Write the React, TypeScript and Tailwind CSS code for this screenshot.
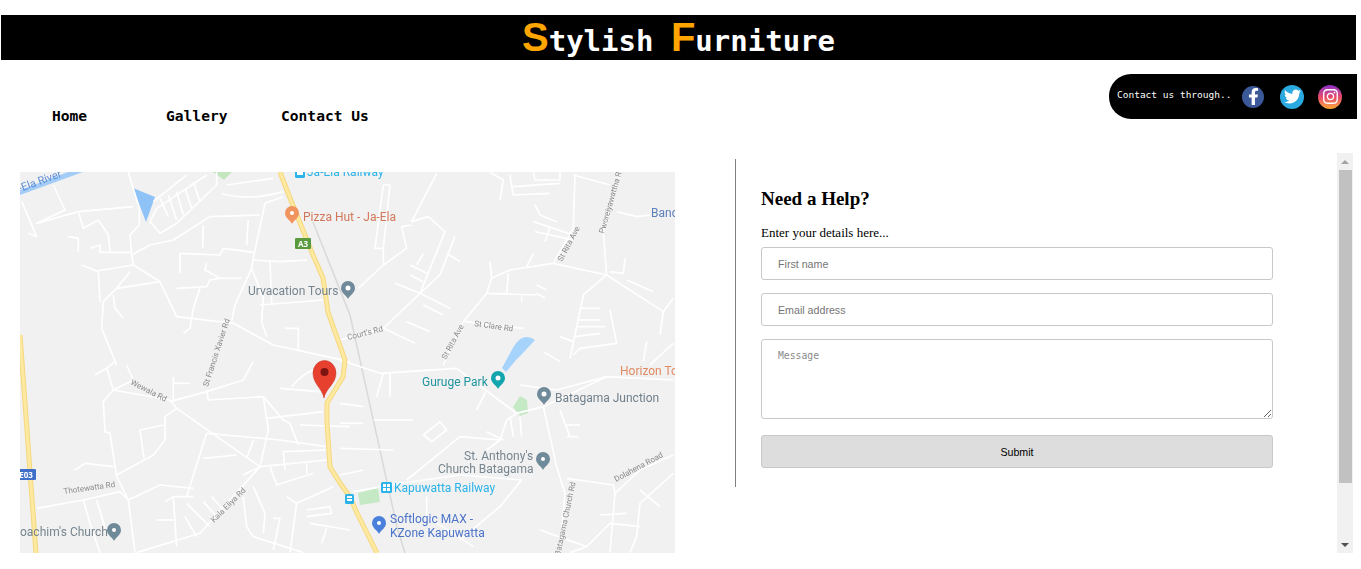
import { FaFacebookF, FaInstagram, FaTwitter } from "react-icons/fa";

// road traces, each group drawn in a 3x grid with its own origin
const roadGroups: { x: number; y: number; d: string[] }[] = [
  {
    x: 20,
    y: 165,
    d: [
      "M325 22L358 130L358 180L330 210L335 270L340 300L420 350L470 455L640 475L760 540L990 590",
      "M100 60L135 135L50 175L175 140L340 125",
      "M5 110L50 215L25 205",
      "M175 140L190 190L235 165L265 210L270 260",
      "M145 215L175 220L175 260",
      "M210 250L240 240L240 262L335 262",
      "M335 270L390 240L460 225L570 155L720 150",
      "M185 300L230 318L340 300",
      "M235 318L240 410",
      "M290 370L330 320",
      "M290 370L420 350",
      "M290 370L250 410L245 490L290 600",
      "M280 390L285 430L310 460",
      "M480 265L480 325",
      "M480 265L600 270L610 250L700 262",
      "M560 295L555 315L600 340L570 345L560 365L470 370",
      "M600 340L665 340",
      "M540 370L520 430L510 490L490 505",
      "M550 180L548 250",
      "M685 165L680 240",
      "M735 115L790 95",
      "M735 115L700 280L695 310L645 420L635 470",
      "M700 285L780 290L860 285",
      "M750 290L755 415",
      "M695 310L730 400L725 470L740 515",
      "M720 420L910 405",
      "M795 490L835 490L835 555",
      "M390 170L420 205L470 175L590 60L590 22",
      "M390 170L410 130L560 30",
      "M400 110L500 30",
      "M420 100L445 155",
      "M445 90L470 165",
      "M470 80L490 150",
      "M495 70L515 130",
      "M520 50L540 110",
      "M605 85Q680 110 790 80",
      "M620 60L760 40",
    ],
  },
  {
    x: 340,
    y: 165,
    d: [
      "M290 25L215 170L265 155L315 200L240 385L130 490",
      "M215 180L185 185L200 250L130 300L55 370",
      "M130 60L150 60L130 250L105 250L130 60",
      "M130 250L130 295",
      "M345 215L300 330L240 385",
      "M165 355L240 385L330 430",
      "M210 300L260 325",
      "M230 300L250 265",
      "M210 330L250 350",
      "M320 265L360 290",
      "M250 420L310 450",
      "M200 470L270 500",
      "M0 525L130 490L225 535",
      "M310 600L370 470L440 385L455 340L450 290",
      "M455 340L510 315L640 295L700 190L705 30",
      "M440 385L590 390",
      "M505 325L500 385",
      "M590 360L620 375",
      "M590 385L615 400",
      "M545 395L545 410",
      "M580 265L560 305",
      "M375 470L550 490",
      "M700 30L810 60",
      "M640 295L800 330L970 440",
      "M800 330L790 200L840 30",
      "M830 140L890 155L930 150",
      "M800 330L730 390L690 580",
      "M810 320L850 325L855 280",
      "M860 345L940 380",
      "M970 440L1000 400",
      "M970 440L960 510",
      "M720 430H780",
      "M715 465H780",
      "M710 485H795",
      "M705 515L780 505",
      "M810 435L830 535L720 550L700 570",
      "M660 515L700 530",
      "M610 560L660 590",
      "M920 530L910 590",
      "M930 600L1000 535",
      "M585 120L600 150L650 170",
      "M580 170L700 210",
      "M585 200L700 225",
      "M630 185L615 230",
      "M450 22L490 45L480 105",
      "M510 30L520 90L630 85",
      "M520 65L660 55",
      "M580 22L585 45H660V22",
    ],
  },
  {
    x: 20,
    y: 360,
    d: [
      "M225 45L260 25L280 90L250 125L255 215L270 220L290 350L325 420L345 578",
      "M260 25L285 5",
      "M280 90L450 120L470 145L720 320",
      "M320 15L340 60L280 90",
      "M450 125L560 95L670 60L700 5",
      "M560 90L565 120L730 110L790 180L810 190L835 255",
      "M470 145L435 170L435 240L400 285L290 345",
      "M360 210L430 195",
      "M360 210L372 295",
      "M460 50L460 125",
      "M460 70H510",
      "M165 330L195 310L280 320",
      "M50 445L190 420L300 395L325 420L420 375L520 385",
      "M190 420L210 490L240 578",
      "M230 420L260 520",
      "M560 220L500 410H520",
      "M560 220L780 240L920 260",
      "M550 295L650 285",
      "M720 320L920 300",
      "M700 240L680 295",
      "M730 110L745 210L720 320L540 520L350 578",
      "M750 320L770 375L880 340",
      "M860 310V340",
      "M790 275L795 330",
      "M790 275L920 270",
      "M815 80Q850 40 880 30",
      "M780 85L900 95",
      "M740 175L910 155",
      "M840 195L990 200",
      "M670 345L720 320",
      "M830 430L940 380",
      "M800 410L830 430L810 578",
      "M700 380L735 460L730 520",
      "M670 410L680 500L700 530L850 578",
      "M760 475L780 475L760 570",
      "M435 425L460 410H500",
      "M460 410L470 560",
      "M410 480H460",
      "M500 430L570 500",
      "M550 425L590 470",
      "M575 410L610 450",
      "M495 470L530 530",
      "M860 450L930 440L935 460L860 470",
      "M870 490L990 510",
      "M920 505L905 550",
    ],
  },
  {
    x: 340,
    y: 360,
    d: [
      "M0 0L120 40L350 25L530 160L610 140L800 50L1000 60",
      "M130 40L110 110",
      "M150 40V110",
      "M530 160L500 180L480 240L360 230L200 360",
      "M610 140L650 320L675 400L660 578",
      "M510 170L520 230",
      "M540 170L545 230",
      "M250 225L300 185L320 210L275 245L250 225",
      "M440 215L490 240",
      "M480 240L440 270",
      "M100 180H220",
      "M0 190L70 190",
      "M0 130L70 140",
      "M0 265L160 270",
      "M0 345L70 330",
      "M40 395L180 370L360 345L545 360L480 440L360 540",
      "M680 355L820 375L825 400L810 578",
      "M825 400L900 330L1000 285",
      "M900 390L960 440",
      "M1000 340L900 430L890 530L870 578",
      "M780 465L860 460",
      "M600 510L740 560",
      "M740 560L810 490L900 500",
      "M690 578L740 560",
      "M660 150L690 230",
      "M680 195H720",
      "M680 230H715",
      "M540 75L650 90L800 50",
      "M410 150L440 90",
      "M260 410V470L400 560",
    ],
  },
];

const streetLabels: { text: string; x: number; y: number; r: number }[] = [
  { text: "Court's Rd", x: 348, y: 340, r: -14 },
  { text: "St Francis Xavier Rd", x: 208, y: 387, r: -72 },
  { text: "St Rita Ave", x: 446, y: 360, r: -62 },
  { text: "St Clare Rd", x: 474, y: 326, r: 8 },
  { text: "St Rita Ave", x: 562, y: 262, r: -62 },
  { text: "Pworeiyawattha Rd", x: 604, y: 234, r: -74 },
  { text: "Wewala Rd", x: 130, y: 384, r: 27 },
  { text: "Thotewatta Rd", x: 64, y: 494, r: -8 },
  { text: "Kala Eliya Rd", x: 214, y: 523, r: -45 },
  { text: "Dolahena Road", x: 616, y: 482, r: -28 },
  { text: "Batagama Church Rd", x: 560, y: 556, r: -78 },
];

const placeLabels: { text: string; x: number; y: number; fill: string }[] = [
  { text: "Ja-Ela Railway", x: 307, y: 176, fill: "#2bb3ea" },
  { text: "Pizza Hut - Ja-Ela", x: 303, y: 221, fill: "#d2785a" },
  { text: "Urvacation Tours", x: 248, y: 295, fill: "#76858f" },
  { text: "Banc", x: 651, y: 217, fill: "#5c80b8" },
  { text: "Horizon To", x: 620, y: 375, fill: "#e08a62" },
  { text: "Guruge Park", x: 422, y: 386, fill: "#1f939f" },
  { text: "Batagama Junction", x: 555, y: 402, fill: "#70808c" },
  { text: "St. Anthony's", x: 464, y: 460, fill: "#76858f" },
  { text: "Church Batagama", x: 438, y: 473, fill: "#76858f" },
  { text: "Kapuwatta Railway", x: 394, y: 492, fill: "#2bb3ea" },
  { text: "Softlogic MAX -", x: 390, y: 523, fill: "#4a73c9" },
  { text: "KZone Kapuwatta", x: 390, y: 537, fill: "#4a73c9" },
  { text: "oachim's Church", x: 20, y: 536, fill: "#76858f" },
];

const pins: { x: number; y: number; fill: string; dot: number }[] = [
  { x: 348, y: 290, fill: "#6f8a99", dot: 2.5 },
  { x: 498, y: 380, fill: "#12a5ad", dot: 2.5 },
  { x: 544, y: 396, fill: "#6f8a99", dot: 2.5 },
  { x: 543, y: 461, fill: "#6f8a99", dot: 2 },
  { x: 379, y: 525, fill: "#4a80dc", dot: 2 },
  { x: 114, y: 532, fill: "#6f8a99", dot: 2 },
  { x: 292, y: 215, fill: "#f0935f", dot: 2 },
];

function MapPicture() {
  return (
    <svg
      viewBox="20 172 655 381"
      className="block h-[381px] w-[655px] bg-[#f2f1f1] blur-[0.5px]"
    >
      <path d="M20 195L83 172L68 172L20 190Z" fill="#a3cdf7" />
      <path d="M133 188L155 197L146 222Z" fill="#8fc3f7" />
      <path d="M213 172L232 172L224 180Z" fill="#c3e6bf" />
      <path d="M514 346Q523 332 535 340L522 354L516 360L506 372L502 368Z" fill="#a5d3fb" />
      <path d="M513 407L520 396L527 400L528 413L520 416Z" fill="#c5e8c5" />
      <path d="M358 493L378 488L380 502L360 505Z" fill="#c5e8c5" />

      <path d="M313 222L350 315L397 527L405 553" fill="none" stroke="#d9d9d9" strokeWidth="1.5" />

      {roadGroups.map((group) => (
        <g key={group.x + "-" + group.y} transform={`translate(${group.x} ${group.y}) scale(0.3333)`}>
          {group.d.map((d) => (
            <path key={d} d={d} fill="none" stroke="#ffffff" strokeWidth="5" strokeLinejoin="round" />
          ))}
        </g>
      ))}

      <path
        d="M280 172L290 198L313 255L323 278L328 312L345 360L343 377L327 403L327 423L330 467L340 483L350 497L357 513L377 553"
        fill="none"
        stroke="#f5d77f"
        strokeWidth="5"
        strokeLinejoin="round"
      />
      <path
        d="M280 172L290 198L313 255L323 278L328 312L345 360L343 377L327 403L327 423L330 467L340 483L350 497L357 513L377 553"
        fill="none"
        stroke="#fde9a0"
        strokeWidth="3"
        strokeLinejoin="round"
      />
      <path d="M20 335L36 553" fill="none" stroke="#f5d77f" strokeWidth="5" />
      <path d="M20 335L36 553" fill="none" stroke="#fde9a0" strokeWidth="3" />

      {/* road shields */}
      <rect x="295" y="238" width="16" height="11" rx="1" fill="#5a9a3f" />
      <text x="303" y="246.5" textAnchor="middle" fontSize="8" fontWeight="700" fill="#fff">
        A3
      </text>
      <rect x="14" y="469" width="22" height="11" rx="1" fill="#3f6fc9" />
      <text x="26" y="477.5" textAnchor="middle" fontSize="8" fontWeight="700" fill="#fff">
        E03
      </text>

      {/* transit squares */}
      <rect x="295" y="168" width="10" height="10" rx="1.5" fill="#2bb3ea" />
      <rect x="297" y="170" width="6" height="5" fill="#fff" />
      <rect x="345" y="494" width="9" height="10" rx="1.5" fill="#2bb3ea" />
      <rect x="347" y="496" width="5" height="2" fill="#fff" />
      <rect x="347" y="499" width="5" height="2" fill="#fff" />
      <rect x="381" y="482" width="11" height="11" rx="1.5" fill="#2bb3ea" />
      <rect x="383" y="484" width="3" height="3" fill="#fff" />
      <rect x="387" y="484" width="3" height="3" fill="#fff" />
      <rect x="383" y="488" width="3" height="3" fill="#fff" />
      <rect x="387" y="488" width="3" height="3" fill="#fff" />

      {pins.map((pin) => (
        <g key={pin.x + "-" + pin.y}>
          <path
            d={`M${pin.x} ${pin.y + 9}C${pin.x - 2} ${pin.y + 5} ${pin.x - 7} ${pin.y + 3} ${pin.x - 7} ${pin.y - 2}A7 7 0 0 1 ${pin.x + 7} ${pin.y - 2}C${pin.x + 7} ${pin.y + 3} ${pin.x + 2} ${pin.y + 5} ${pin.x} ${pin.y + 9}Z`}
            fill={pin.fill}
          />
          <circle cx={pin.x} cy={pin.y - 2} r={pin.dot} fill="#fff" />
        </g>
      ))}

      {/* red marker */}
      <path
        d="M324 398C322 388 313 384 313 373A11 12 0 0 1 336 373C336 384 326 388 324 398Z"
        fill="#e8402f"
        stroke="#c5321f"
        strokeWidth="0.5"
      />
      <circle cx="324.5" cy="372" r="4" fill="#7d1411" />

      <g fontFamily="Roboto, sans-serif">
        <text x="20" y="192" fontSize="11" fill="#5b8ed6" transform="rotate(-20 20 192)">
          -Ela River
        </text>
        {streetLabels.map((label) => (
          <text
            key={label.text + label.x}
            x={label.x}
            y={label.y}
            fontSize="8"
            fill="#8a8a8a"
            transform={`rotate(${label.r} ${label.x} ${label.y})`}
          >
            {label.text}
          </text>
        ))}
        {placeLabels.map((label) => (
          <text key={label.text} x={label.x} y={label.y} fontSize="12" fill={label.fill}>
            {label.text}
          </text>
        ))}
      </g>
    </svg>
  );
}

function ScrollTrack() {
  return (
    <div className="flex h-[400px] w-[16px] shrink-0 flex-col items-center bg-[#f1f1f1]">
      <div className="flex h-[17px] items-center justify-center">
        <div className="h-0 w-0 border-x-4 border-b-4 border-x-transparent border-b-[#a3a3a3]" />
      </div>
      <div className="h-[313px] w-[13px] bg-[#c1c1c1]" />
      <div className="flex-1" />
      <div className="flex h-[17px] items-center justify-center">
        <div className="h-0 w-0 border-x-4 border-t-4 border-x-transparent border-t-[#505050]" />
      </div>
    </div>
  );
}

export default function App() {
  return (
    <div className="h-[569px] w-[1361px] overflow-hidden bg-white pt-[15px]">
      <header className="ml-px flex h-[45px] w-[1355px] items-baseline justify-center bg-black font-['DejaVu_Sans_Mono',monospace] text-[29px] font-bold leading-[44px] text-white">
        <span className="font-['Liberation_Sans',sans-serif] text-[40px] text-[#ffa500]">S</span>
        <span>tylish&nbsp;</span>
        <span className="font-['Liberation_Sans',sans-serif] text-[40px] text-[#ffa500]">F</span>
        <span>urniture</span>
      </header>

      <div className="flex w-[1357px] items-start justify-between pt-[14px]">
        <nav className="flex pl-[52px] pt-[32px] font-['DejaVu_Sans_Mono',monospace] text-[14.6px] font-bold leading-[20px] text-black">
          <a className="w-[114px]">Home</a>
          <a className="w-[115px]">Gallery</a>
          <a>Contact Us</a>
        </nav>
        <div className="flex h-[45px] w-[248px] items-center rounded-l-[22px] bg-black pl-2 font-['DejaVu_Sans_Mono',monospace] text-[9.5px] text-white">
          <span className="w-[125px] pb-[2px]">Contact us through..</span>
          <span className="flex h-[22px] w-[22px] items-center justify-center rounded-full bg-[#3b5998] text-[17px]">
            <FaFacebookF />
          </span>
          <span className="ml-4 flex h-6 w-6 items-center justify-center rounded-full bg-[#2aa9e0] text-[17px]">
            <FaTwitter />
          </span>
          <span className="ml-[14px] flex h-6 w-6 items-center justify-center rounded-full bg-linear-to-t from-[#f9a825] via-[#e8456a] to-[#8e24c9] text-[17px]">
            <FaInstagram />
          </span>
        </div>
      </div>

      <div className="flex pt-[27px]">
        <div className="ml-5 mt-[19px] w-[655px] shrink-0">
          <MapPicture />
        </div>
        <section className="ml-[60px] mt-[6px] h-[328px] w-[602px] shrink-0 border-l border-[#808080] pl-[25px] font-['Liberation_Serif',serif]">
          <h2 className="mt-[30px] text-[19px] font-bold leading-[20px] text-black">Need a Help?</h2>
          <p className="mt-[15px] text-[13px] leading-[18px] text-black">Enter your details here...</p>
          <form className="mt-[5px] flex w-[512px] flex-col gap-[13px] font-['Liberation_Sans',sans-serif] text-[10.67px]">
            <input
              placeholder="First name"
              className="h-[33px] rounded-[3px] border border-[#c8c8c8] px-4 placeholder:text-[#757575]"
            />
            <input
              placeholder="Email address"
              className="h-[33px] rounded-[3px] border border-[#c8c8c8] px-4 placeholder:text-[#757575]"
            />
            <textarea
              placeholder="Message"
              className="h-[80px] rounded-[3px] border border-[#c8c8c8] px-4 pb-2 pt-[9px] font-['DejaVu_Sans_Mono',monospace] text-[9.75px] placeholder:text-[#8a8a8a]"
            />
            <button
              type="button"
              className="mt-[3px] h-[33px] rounded-[3px] border border-[#c8c8c8] bg-[#dddddd] text-black"
            >
              Submit
            </button>
          </form>
        </section>
        <ScrollTrack />
      </div>
    </div>
  );
}
